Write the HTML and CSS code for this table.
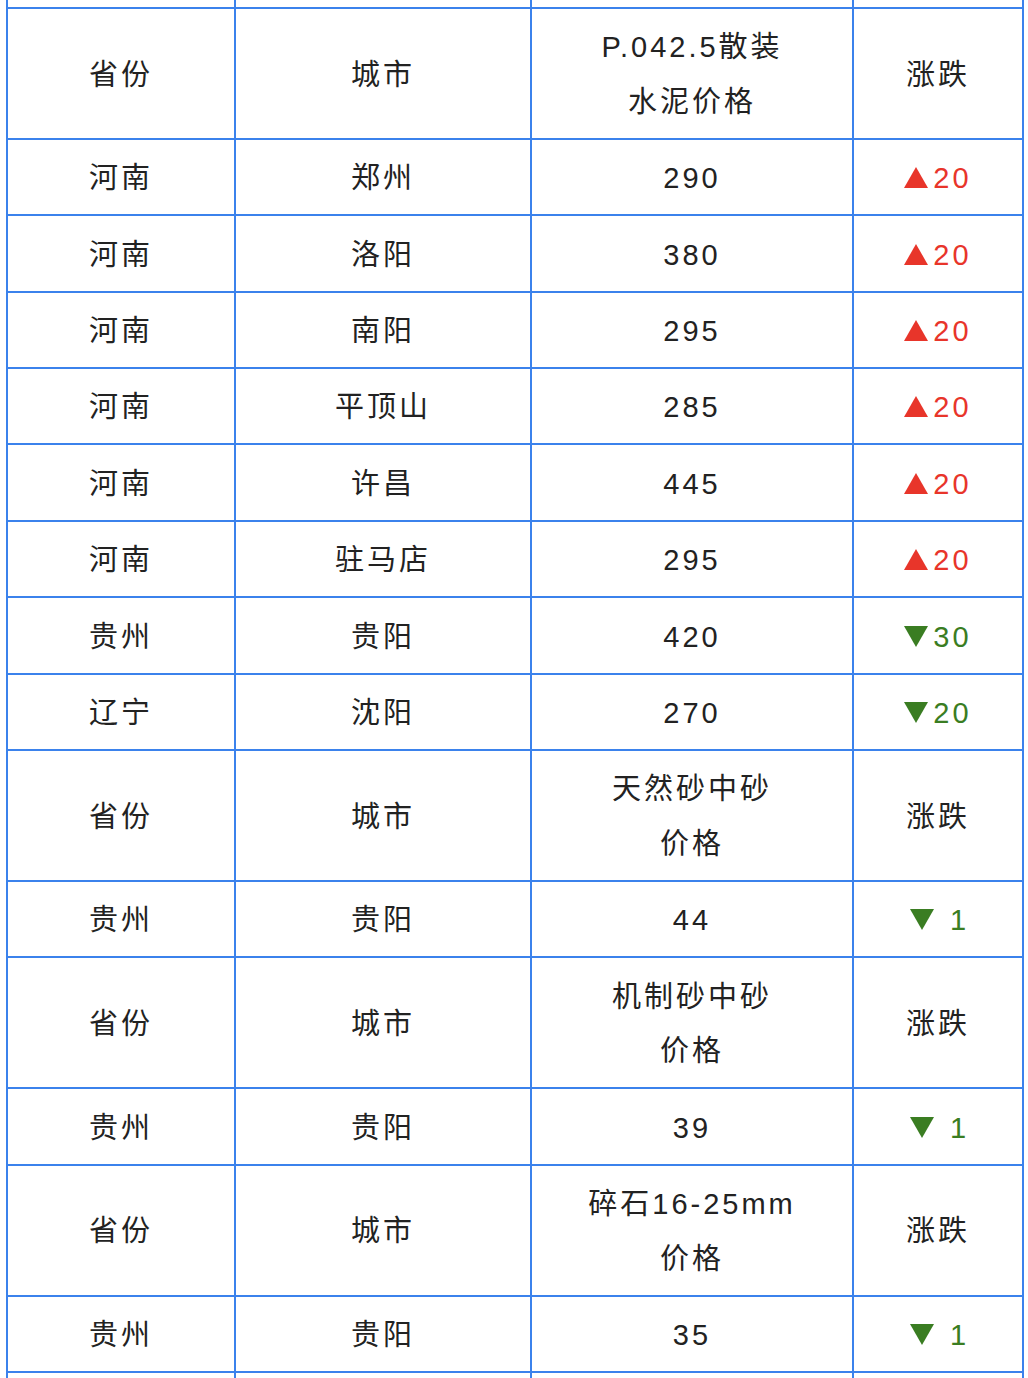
FILE: index.html
```html
<!DOCTYPE html>
<html lang="zh-CN">
<head>
<meta charset="utf-8">
<title>价格表</title>
<link rel="stylesheet" href="styles.css">
</head>
<body>
<table class="price">
  <colgroup>
    <col class="c1"><col class="c2"><col class="c3"><col class="c4">
  </colgroup>
  <tbody>
    <tr class="cut-top"><td></td><td></td><td></td><td></td></tr>
    <tr class="head"><td>省份</td><td>城市</td><td>P.042.5散装<br>水泥价格</td><td>涨跌</td></tr>
    <tr><td>河南</td><td>郑州</td><td>290</td><td class="up"><svg class="tri" viewBox="0 0 24 21"><path d="M12 0L24 21H0Z"/></svg>20</td></tr>
    <tr><td>河南</td><td>洛阳</td><td>380</td><td class="up"><svg class="tri" viewBox="0 0 24 21"><path d="M12 0L24 21H0Z"/></svg>20</td></tr>
    <tr><td>河南</td><td>南阳</td><td>295</td><td class="up"><svg class="tri" viewBox="0 0 24 21"><path d="M12 0L24 21H0Z"/></svg>20</td></tr>
    <tr><td>河南</td><td>平顶山</td><td>285</td><td class="up"><svg class="tri" viewBox="0 0 24 21"><path d="M12 0L24 21H0Z"/></svg>20</td></tr>
    <tr><td>河南</td><td>许昌</td><td>445</td><td class="up"><svg class="tri" viewBox="0 0 24 21"><path d="M12 0L24 21H0Z"/></svg>20</td></tr>
    <tr><td>河南</td><td>驻马店</td><td>295</td><td class="up"><svg class="tri" viewBox="0 0 24 21"><path d="M12 0L24 21H0Z"/></svg>20</td></tr>
    <tr><td>贵州</td><td>贵阳</td><td>420</td><td class="down"><svg class="tri" viewBox="0 0 24 21"><path d="M0 0H24L12 21Z"/></svg>30</td></tr>
    <tr><td>辽宁</td><td>沈阳</td><td>270</td><td class="down"><svg class="tri" viewBox="0 0 24 21"><path d="M0 0H24L12 21Z"/></svg>20</td></tr>
    <tr class="head"><td>省份</td><td>城市</td><td>天然砂中砂<br>价格</td><td>涨跌</td></tr>
    <tr><td>贵州</td><td>贵阳</td><td>44</td><td class="down"><svg class="tri wide" viewBox="0 0 24 21"><path d="M0 0H24L12 21Z"/></svg>1</td></tr>
    <tr class="head"><td>省份</td><td>城市</td><td>机制砂中砂<br>价格</td><td>涨跌</td></tr>
    <tr><td>贵州</td><td>贵阳</td><td>39</td><td class="down"><svg class="tri wide" viewBox="0 0 24 21"><path d="M0 0H24L12 21Z"/></svg>1</td></tr>
    <tr class="head"><td>省份</td><td>城市</td><td>碎石16-25mm<br>价格</td><td>涨跌</td></tr>
    <tr><td>贵州</td><td>贵阳</td><td>35</td><td class="down"><svg class="tri wide" viewBox="0 0 24 21"><path d="M0 0H24L12 21Z"/></svg>1</td></tr>
    <tr class="cut-bottom"><td></td><td></td><td></td><td></td></tr>
  </tbody>
</table>
</body>
</html>
```
FILE: styles.css
```css
html, body {
  margin: 0;
  padding: 0;
  background: #ffffff;
}

body {
  overflow: hidden;
  height: 1378px;
}

.price {
  margin: 0 6px;
  width: 1016px;
  table-layout: fixed;
  border-collapse: collapse;
  font-family: "Liberation Sans", "Noto Sans CJK SC", sans-serif;
  font-size: 29px;
  letter-spacing: 3px;
  color: #222222;
}

.c1 { width: 228px; }
.c2 { width: 296px; }
.c3 { width: 322px; }
.c4 { width: 170px; }

.price td {
  border: 2px solid #3b82ec;
  text-align: center;
  vertical-align: middle;
  line-height: 54.6px;
  padding: 11.4px 0 8.4px;
}

.price .cut-top td {
  border-top: none;
  padding: 0;
  height: 7px;
  line-height: 0;
}

.price .cut-bottom td {
  border-bottom: none;
  padding: 0;
  height: 30px;
}

.up { color: #e8352a; }
.down { color: #3a7d22; }

.tri {
  width: 24px;
  height: 21px;
  vertical-align: baseline;
  margin-right: 5px;
  fill: currentColor;
}

.tri.wide {
  margin-left: 3px;
  margin-right: 16px;
}
```
